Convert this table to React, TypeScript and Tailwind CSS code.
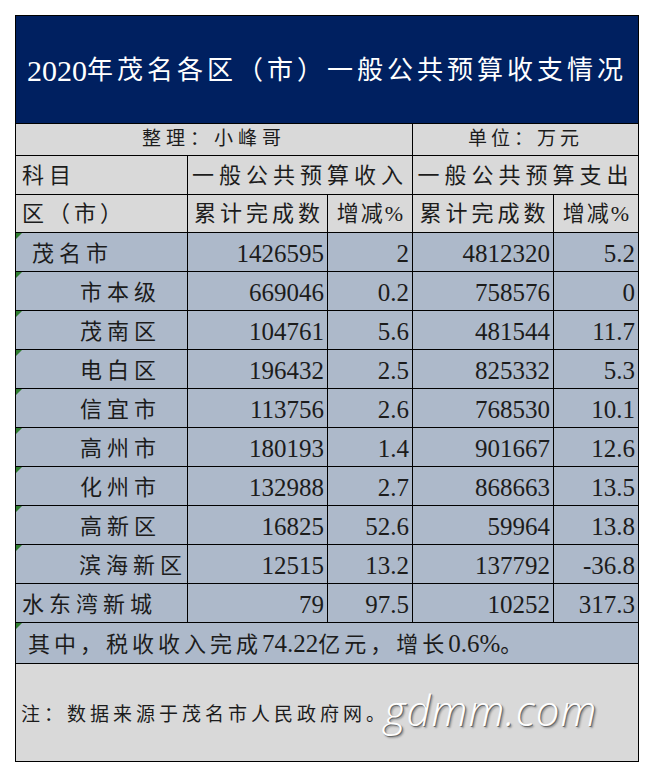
import React from "react";

type Row = { name: string; indent: number; a: string; b: string; c: string; d: string; mark: boolean };

const rows: Row[] = [
  { name: "茂名市", indent: 16, a: "1426595", b: "2", c: "4812320", d: "5.2", mark: true },
  { name: "市本级", indent: 64, a: "669046", b: "0.2", c: "758576", d: "0", mark: true },
  { name: "茂南区", indent: 64, a: "104761", b: "5.6", c: "481544", d: "11.7", mark: true },
  { name: "电白区", indent: 64, a: "196432", b: "2.5", c: "825332", d: "5.3", mark: true },
  { name: "信宜市", indent: 64, a: "113756", b: "2.6", c: "768530", d: "10.1", mark: true },
  { name: "高州市", indent: 64, a: "180193", b: "1.4", c: "901667", d: "12.6", mark: true },
  { name: "化州市", indent: 64, a: "132988", b: "2.7", c: "868663", d: "13.5", mark: true },
  { name: "高新区", indent: 64, a: "16825", b: "52.6", c: "59964", d: "13.8", mark: true },
  { name: "滨海新区", indent: 63, a: "12515", b: "13.2", c: "137792", d: "-36.8", mark: true },
  { name: "水东湾新城", indent: 6, a: "79", b: "97.5", c: "10252", d: "317.3", mark: false },
];

function Mark() {
  return (
    <span className="absolute left-0 top-0 w-0 h-0 border-t-[6px] border-t-[#2f7d2f] border-r-[6px] border-r-transparent" />
  );
}

function Num({ w, v, last }: { w: string; v: string; last?: boolean }) {
  return (
    <div
      className={`${w} h-full flex items-center justify-end pr-[3px] pt-[4px] text-[25px] text-[#1c1c1c] font-['Liberation_Serif',serif] ${last ? "" : "border-r border-black"}`}
    >
      {v}
    </div>
  );
}

export default function App() {
  return (
    <div className="w-[654px] h-[777px] bg-white font-['Liberation_Serif','Noto_Sans_CJK_SC',serif]">
      <div className="pt-[15px] pl-[15px]">
        <div className="w-[624px] border-l border-r border-t border-black">
          {/* Title */}
          <div className="h-[108px] bg-[#002060] border-b border-black flex items-center justify-center pt-[2px] text-white whitespace-nowrap">
            <span className="text-[30px] font-['Liberation_Serif',serif]">2020</span>
            <span className="text-[26px] tracking-[4px]">年茂名各区（市）一般公共预算收支情况</span>
          </div>
          {/* 整理 */}
          <div className="h-[32px] bg-[#d9d9d9] border-b border-black flex text-[19px] text-[#1c1c1c] whitespace-nowrap">
            <div className="w-[397px] border-r border-black flex items-center justify-center tracking-[5px]">
              整理：小峰哥
            </div>
            <div className="flex-1 flex items-center justify-center tracking-[4px]">单位：万元</div>
          </div>
          {/* 科目 */}
          <div className="h-[39px] bg-[#d9d9d9] border-b border-black flex text-[22px] text-[#1c1c1c] whitespace-nowrap">
            <div className="w-[172px] border-r border-black flex items-center pl-[6px] tracking-[5px]">科目</div>
            <div className="w-[225px] border-r border-black flex items-center justify-center tracking-[5px]">
              一般公共预算收入
            </div>
            <div className="flex-1 flex items-center justify-center tracking-[5px]">一般公共预算支出</div>
          </div>
          {/* 区（市） */}
          <div className="h-[38px] bg-[#d9d9d9] border-b border-black flex text-[22px] text-[#1c1c1c] whitespace-nowrap">
            <div className="w-[172px] border-r border-black flex items-center pl-[6px] tracking-[4px]">区（市）</div>
            <div className="w-[140px] border-r border-black flex items-center justify-center tracking-[4px] pl-[3px]">
              累计完成数
            </div>
            <div className="w-[85px] border-r border-black flex items-center justify-center tracking-[2px]">
              增减<span className="font-['Liberation_Serif',serif] tracking-normal">%</span>
            </div>
            <div className="w-[141px] border-r border-black flex items-center justify-center tracking-[4px] pl-[3px]">
              累计完成数
            </div>
            <div className="flex-1 flex items-center justify-center tracking-[2px]">
              增减<span className="font-['Liberation_Serif',serif] tracking-normal">%</span>
            </div>
          </div>
          {/* Data rows */}
          {rows.map((r) => (
            <div key={r.name} className="h-[39px] bg-[#adb9ca] border-b border-black flex">
              <div
                className="relative w-[172px] shrink-0 border-r border-black flex items-center text-[22px] tracking-[5px] text-[#1c1c1c] pt-[2px] whitespace-nowrap overflow-hidden"
                style={{ paddingLeft: r.indent }}
              >
                {r.mark && <Mark />}
                {r.name}
              </div>
              <Num w="w-[140px]" v={r.a} />
              <Num w="w-[85px]" v={r.b} />
              <Num w="w-[141px]" v={r.c} />
              <Num w="flex-1" v={r.d} last />
            </div>
          ))}
          {/* 其中 */}
          <div className="relative h-[41px] bg-[#adb9ca] border-b border-black flex items-center pl-[12px] pt-[2px] text-[22px] tracking-[4px] text-[#1c1c1c] whitespace-nowrap">
            <Mark />
            其中，税收收入完成
            <span className="tracking-normal text-[25px] font-['Liberation_Serif',serif]">74.22</span>
            亿元，增长
            <span className="tracking-normal text-[25px] font-['Liberation_Serif',serif]">0.6%</span>。
          </div>
          {/* Note */}
          <div className="relative h-[98px] bg-[#d9d9d9] border-b border-black flex items-center pl-[5px] pt-[6px] text-[19px] tracking-[4px] text-[#1c1c1c] whitespace-nowrap">
            注：数据来源于茂名市人民政府网。
            <span
              className="absolute left-[368px] top-[14px] text-[42px] italic font-light text-white tracking-[1px] font-['Open_Sans','DejaVu_Sans',sans-serif]"
              style={{ textShadow: "1px 1px 0 #6b6b6b, 2px 2px 2px rgba(0,0,0,0.35)" }}
            >
              gdmm.com
            </span>
          </div>
        </div>
      </div>
    </div>
  );
}
